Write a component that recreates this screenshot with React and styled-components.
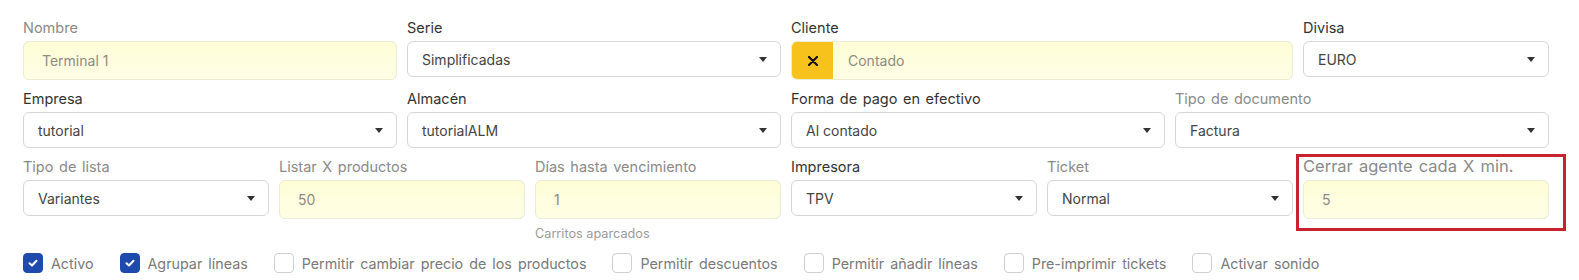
import styled, { createGlobalStyle, css } from "styled-components";

const GlobalStyle = createGlobalStyle`
body {
  margin:0;
  background:#ffffff;
  font-family:Inter, "Noto Sans", sans-serif;
}
`

const Page = styled.div`
padding:19px 30px 0 23px;
`

const Grid = styled.div`
display:grid;
grid-template-columns:repeat(12, 1fr);
column-gap:10px;
row-gap:10px;
align-items:start;
`

const Field = styled.div`
grid-column:span ${p => p.span};
display:flex;
flex-direction:column;
position:relative;
min-width:0;
`

const Label = styled.label`
font-size:${p => p.big ? "16.5px" : "14.5px"};
line-height:17px;
margin-bottom:5px;
word-spacing:1.5px;
color:${p => p.muted ? "#8a8a8a" : "#333333"};
white-space:nowrap;
`

const boxBase = css`
box-sizing:border-box;
border-radius:6px;
font-size:14px;
display:flex;
align-items:center;
`

const Input = styled.div`
${boxBase};
height:39px;
padding:0 18px;
background:linear-gradient(180deg, #fefdd6 0%, #fffee6 100%);
border:1px solid #ecebd3;
color:#8c8c80;
`

const Select = styled.div`
${boxBase};
height:36px;
padding:0 14px;
background:#ffffff;
border:1px solid #d6d6d6;
color:#444444;
justify-content:space-between;
`

const Caret = styled.span`
width:0;
height:0;
border-left:4px solid transparent;
border-right:4px solid transparent;
border-top:5px solid #333333;
margin-right:-1px;
`

const Combo = styled.div`
${boxBase};
height:39px;
border:1px solid #ecebd3;
background:linear-gradient(180deg, #fefdd6 0%, #fffee6 100%);
overflow:hidden;
`

const ClearButton = styled.span`
width:41px;
height:100%;
background:#f7c21c;
display:flex;
align-items:center;
justify-content:center;
`

const ComboText = styled.span`
padding-left:15px;
color:#8c8c80;
`

const Helper = styled.span`
font-size:12.7px;
line-height:15px;
color:#9a9a9a;
margin-top:7px;
`

const Highlight = styled.span`
position:absolute;
top:-4px;
left:-7px;
right:-17px;
bottom:-12px;
border:3px solid #c8222e;
pointer-events:none;
`

const Checks = styled.div`
display:flex;
align-items:center;
margin-top:12px;
`

const Check = styled.label`
display:flex;
align-items:center;
gap:8px;
margin-right:26px;
font-size:14.3px;
word-spacing:2px;
color:#7a7a7a;
white-space:nowrap;
`

const Box = styled.span`
width:20px;
height:20px;
box-sizing:border-box;
border-radius:4px;
display:flex;
align-items:center;
justify-content:center;
${p => p.checked
  ? css`background:#1f4aad; border:1px solid #1f4aad;`
  : css`background:#ffffff; border:1px solid #cfcfcf;`}
`

const Tick = () => (
  <svg width="12" height="12" viewBox="0 0 12 12" fill="none">
    <path d="M2.5 6.2 L5 8.5 L9.5 3.8" stroke="#ffffff" strokeWidth="2" strokeLinecap="round" strokeLinejoin="round" />
  </svg>
)

const Cross = () => (
  <svg width="10" height="10" viewBox="0 0 10 10" fill="none">
    <path d="M1 1 L9 9 M9 1 L1 9" stroke="#111111" strokeWidth="2.2" strokeLinecap="round" />
  </svg>
)

function SelectField({ span, label, value, muted }) {
  return (
    <Field span={span}>
      <Label muted={muted}>{label}</Label>
      <Select>
        {value}
        <Caret />
      </Select>
    </Field>
  )
}

function InputField({ span, label, value, muted, helper, highlighted }) {
  return (
    <Field span={span}>
      <Label muted={muted} big={highlighted}>{label}</Label>
      <Input>{value}</Input>
      {helper && <Helper>{helper}</Helper>}
      {highlighted && <Highlight />}
    </Field>
  )
}

const checks = [
  ["Activo", true],
  ["Agrupar líneas", true],
  ["Permitir cambiar precio de los productos", false],
  ["Permitir descuentos", false],
  ["Permitir añadir líneas", false],
  ["Pre-imprimir tickets", false],
  ["Activar sonido", false],
]

export default function App() {
  return (
    <Page>
      <GlobalStyle />
      <Grid>
        <InputField span={3} label="Nombre" value="Terminal 1" muted />
        <SelectField span={3} label="Serie" value="Simplificadas" />
        <Field span={4}>
          <Label>Cliente</Label>
          <Combo>
            <ClearButton><Cross /></ClearButton>
            <ComboText>Contado</ComboText>
          </Combo>
        </Field>
        <SelectField span={2} label="Divisa" value="EURO" />

        <SelectField span={3} label="Empresa" value="tutorial" />
        <SelectField span={3} label="Almacén" value="tutorialALM" />
        <SelectField span={3} label="Forma de pago en efectivo" value="Al contado" />
        <SelectField span={3} label="Tipo de documento" value="Factura" muted />

        <SelectField span={2} label="Tipo de lista" value="Variantes" muted />
        <InputField span={2} label="Listar X productos" value="50" muted />
        <InputField span={2} label="Días hasta vencimiento" value="1" muted helper="Carritos aparcados" />
        <SelectField span={2} label="Impresora" value="TPV" />
        <SelectField span={2} label="Ticket" value="Normal" muted />
        <InputField span={2} label="Cerrar agente cada X min." value="5" muted highlighted />
      </Grid>
      <Checks>
        {checks.map(([text, on]) => (
          <Check key={text}>
            <Box checked={on}>{on && <Tick />}</Box>
            {text}
          </Check>
        ))}
      </Checks>
    </Page>
  )
}
